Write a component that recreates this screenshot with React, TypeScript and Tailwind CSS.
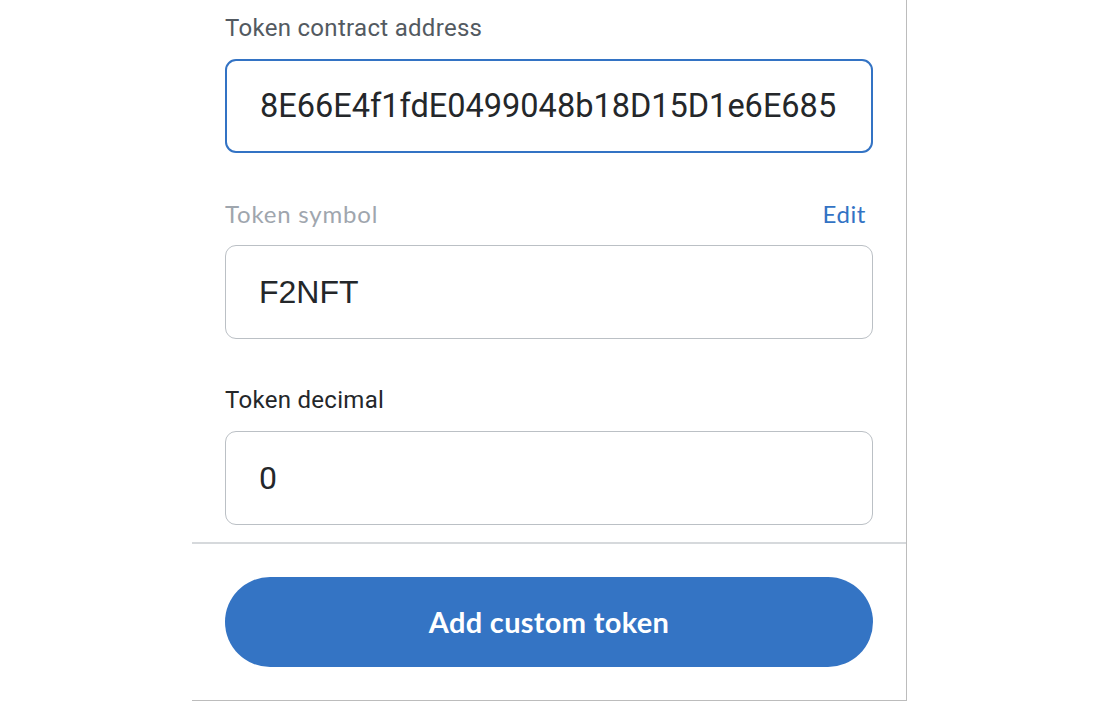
function Field({ label, value, focused, labelClass, valueClass, action }: {
  label: string
  value: string
  focused?: boolean
  labelClass: string
  valueClass: string
  action?: string
}) {
  return (
    <div className="flex flex-col">
      <div className="flex items-center justify-between h-[26px]">
        <span className={labelClass}>{label}</span>
        {action && (
          <button className="font-['Lato',sans-serif] text-[24px] leading-[26px] tracking-[0.6px] text-[#3373c4] pr-[7px]">{action}</button>
        )}
      </div>
      <div
        className={`mt-[18px] h-[94px] rounded-[11px] flex items-center overflow-hidden pl-[33px] pr-[34px] ${
          focused ? 'border-2 border-[#3373c4]' : 'border-[1.5px] border-[#bbc0c5]'
        }`}
      >
        <span className={`whitespace-nowrap text-[#24272a] ${valueClass}`}>{value}</span>
      </div>
    </div>
  )
}

export default function App() {
  return (
    <div className="min-h-screen bg-white">
      <div className="ml-[192px] w-[715px] border-r-[1.5px] border-b-[1.5px] border-[#bcbcbc] bg-white">
        <div className="px-[33px] pt-[15px] flex flex-col gap-[48px]">
          <Field
            label="Token contract address"
            value="8E66E4f1fdE0499048b18D15D1e6E685"
            focused
            labelClass="font-['Roboto',sans-serif] text-[24px] leading-[26px] tracking-[0.3px] text-[#535a61]"
            valueClass="font-['Roboto',sans-serif] text-[32.5px]"
          />
          <Field
            label="Token symbol"
            value="F2NFT"
            action="Edit"
            labelClass="font-['Lato',sans-serif] text-[24px] leading-[26px] tracking-[0.8px] text-[#9fa6ae]"
            valueClass="font-['Liberation_Sans',sans-serif] text-[32px]"
          />
          <Field
            label="Token decimal"
            value="0"
            labelClass="font-['Roboto',sans-serif] text-[24px] leading-[26px] tracking-[0.3px] text-[#24272a]"
            valueClass="font-['Roboto',sans-serif] text-[32px]"
          />
        </div>
        <div className="mt-[17px] border-t-2 border-[#d6d9dc] px-[33px] pt-[33px] pb-[33px]">
          <button
            className="w-full h-[90px] rounded-full bg-[#3474c4] text-white text-[29px] tracking-[0.3px] font-bold font-['Lato',sans-serif]"
          >
            Add custom token
          </button>
        </div>
      </div>
    </div>
  )
}
